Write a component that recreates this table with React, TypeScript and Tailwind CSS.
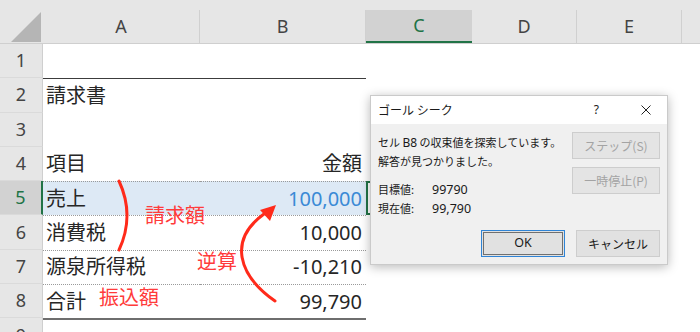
import React from 'react';

const cols = [
  { id: 'A', w: 'w-[157px]' },
  { id: 'B', w: 'w-[166px]' },
  { id: 'C', w: 'w-[106px]' },
  { id: 'D', w: 'w-[105px]' },
  { id: 'E', w: 'w-[105px]' },
];

type Row = {
  n: number;
  a?: string;
  b?: string;
  line?: string; // border on top of A:B
  sel?: boolean;
};

const rows: Row[] = [
  { n: 1 },
  { n: 2, a: '請求書', line: 'border-t border-[#3c3c3c]' },
  { n: 3 },
  { n: 4, a: '項目', b: '金額' },
  { n: 5, a: '売上', b: '100,000', line: 'border-t border-dotted border-[#9a9a9a]', sel: true },
  { n: 6, a: '消費税', b: '10,000', line: 'border-t border-dotted border-[#9a9a9a]' },
  { n: 7, a: '源泉所得税', b: '-10,210', line: 'border-t border-dotted border-[#9a9a9a]' },
  { n: 8, a: '合計', b: '99,790', line: 'border-t border-dotted border-[#9a9a9a]' },
  { n: 9, line: 'border-t-2 border-[#6e6e6e]' },
];

const sheetFont = "font-['Noto_Sans','Noto_Sans_CJK_JP',sans-serif]";
const uiFont = "font-['Noto_Sans_CJK_JP',sans-serif]";

function Header() {
  return (
    <div className="flex h-[44px] bg-[#e6e6e6] border-b border-[#cfcfcf]">
      <div className="w-[43px] h-full flex items-end justify-end pr-[2px] pb-[1px]">
        <svg width="30" height="30" viewBox="0 0 30 30">
          <polygon points="0,30 30,30 30,0" fill="#b5b5b5" />
        </svg>
      </div>
      {cols.map((c) => (
        <div key={c.id} className={`${c.w} h-full flex flex-col justify-end`}>
          {c.id === 'C' ? (
            <div className="h-[33px] bg-[#d2d2d2] border-b-2 border-[#217346] flex items-center justify-center text-[18px] text-[#217346]">
              {c.id}
            </div>
          ) : (
            <div className="h-[33px] border-r border-[#d0d0d0] flex items-center justify-center text-[18px] text-[#444]">
              {c.id}
            </div>
          )}
        </div>
      ))}
      <div className="flex-1" />
    </div>
  );
}

function SheetRow({ r }: { r: Row }) {
  return (
    <div className="flex h-[34.3px] shrink-0">
      <div
        className={`w-[43px] h-full flex items-center justify-center text-[18px] border-b border-[#dadada] ${
          r.sel
            ? 'bg-[#d2d2d2] text-[#217346] border-r-2 border-r-[#217346]'
            : 'bg-[#e6e6e6] text-[#444] border-r border-r-[#cfcfcf]'
        }`}
      >
        {r.n}
      </div>
      <div className={`w-[157px] h-full flex items-center pl-[3px] text-[20px] text-[#262626] ${r.line ?? ''} ${r.sel ? 'bg-[#dde9f5]' : ''}`}>
        {r.a}
      </div>
      <div
        className={`w-[166px] h-full flex items-center justify-end pr-[4px] text-[20px] ${r.line ?? ''} ${
          r.sel ? 'bg-[#dde9f5] text-[#3a8ad6]' : 'text-[#262626]'
        }`}
      >
        {r.b}
      </div>
      <div className={`w-[106px] h-full ${r.sel ? 'border-2 border-[#217346]' : ''}`} />
      <div className="flex-1" />
    </div>
  );
}

function Btn({ children, kind }: { children: React.ReactNode; kind: 'off' | 'ok' | 'on' }) {
  const cls =
    kind === 'off'
      ? 'bg-[#e4e4e4] border-[#cdcdcd] text-[#a3a3a3]'
      : kind === 'ok'
      ? 'bg-[#e1e1e1] border-[#2f84d6] text-[#1a1a1a] shadow-[inset_0_0_0_1px_#e1e1e1,inset_0_0_0_2px_#707070]'
      : 'bg-[#e1e1e1] border-[#cdcdcd] text-[#1a1a1a]';
  return (
    <div className={`h-[27px] flex items-center justify-center border text-[12px] ${cls}`}>{children}</div>
  );
}

function GoalSeekDialog() {
  return (
    <div className={`absolute left-[370px] top-[95px] w-[298px] h-[170px] flex flex-col border border-[#cacaca] shadow-[0_2px_10px_rgba(0,0,0,0.28)] ${uiFont}`}>
      <div className="h-[28px] bg-white flex items-center pl-[7px] pr-[16px] text-[12px] text-[#1a1a1a]">
        <span>ゴール シーク</span>
        <span className="ml-auto text-[12px] font-['Noto_Sans',sans-serif]">?</span>
        <svg className="ml-[42px]" width="10" height="10" viewBox="0 0 10 10">
          <path d="M0.5 0.5 L9.5 9.5 M9.5 0.5 L0.5 9.5" stroke="#222" strokeWidth="1" />
        </svg>
      </div>
      <div className="flex-1 bg-[#f0f0f0] flex flex-col px-[7px] pb-[7px] text-[11px] text-[#1a1a1a]">
        <div className="flex justify-between">
          <div className="pt-[9px]">
            <div className="leading-[18px]">
              セル <span className="font-['Noto_Sans',sans-serif] text-[12px]">B8</span> の収束値を探索しています。
            </div>
            <div className="leading-[18px]">解答が見つかりました。</div>
            <div className="mt-[10px] leading-[19px] flex">
              <span className="w-[54px]">目標値:</span>
              <span className="font-['Noto_Sans',sans-serif] text-[12.5px]">99790</span>
            </div>
            <div className="leading-[19px] flex">
              <span className="w-[54px]">現在値:</span>
              <span className="font-['Noto_Sans',sans-serif] text-[12.5px]">99,790</span>
            </div>
          </div>
          <div className="w-[88px] pt-[8px] flex flex-col gap-[8px]">
            <Btn kind="off">ステップ(S)</Btn>
            <Btn kind="off">一時停止(P)</Btn>
          </div>
        </div>
        <div className="mt-auto flex justify-end gap-[11px]">
          <div className="w-[84px]">
            <Btn kind="ok">
              <span className="font-['Noto_Sans',sans-serif] text-[12.5px]">OK</span>
            </Btn>
          </div>
          <div className="w-[84px]">
            <Btn kind="on">キャンセル</Btn>
          </div>
        </div>
      </div>
    </div>
  );
}

export default function App() {
  return (
    <div className={`relative w-[700px] h-[332px] overflow-hidden bg-white ${sheetFont}`}>
      <Header />
      <div className="flex flex-col">
        {rows.map((r) => (
          <SheetRow key={r.n} r={r} />
        ))}
      </div>

      {/* red annotations */}
      <svg className="absolute left-0 top-0 pointer-events-none" width="700" height="332" viewBox="0 0 700 332">
        <path d="M119 181 Q135 215.5 119 250" fill="none" stroke="#ff2a1a" strokeWidth="3" strokeLinecap="round" />
        <path d="M275 301 C238 275 228 240 264 214" fill="none" stroke="#ff2a1a" strokeWidth="3" strokeLinecap="round" />
        <polygon points="276,205 260,210 270,221" fill="#ff2a1a" />
      </svg>
      <span className="absolute left-[145px] top-[205px] text-[20px] leading-none text-[#ff3b3b] font-['Noto_Sans_CJK_JP',sans-serif]">請求額</span>
      <span className="absolute left-[197px] top-[251px] text-[20px] leading-none text-[#ff3b3b] font-['Noto_Sans_CJK_JP',sans-serif]">逆算</span>
      <span className="absolute left-[99px] top-[287px] text-[20px] leading-none text-[#ff3b3b] font-['Noto_Sans_CJK_JP',sans-serif]">振込額</span>

      <GoalSeekDialog />
    </div>
  );
}
